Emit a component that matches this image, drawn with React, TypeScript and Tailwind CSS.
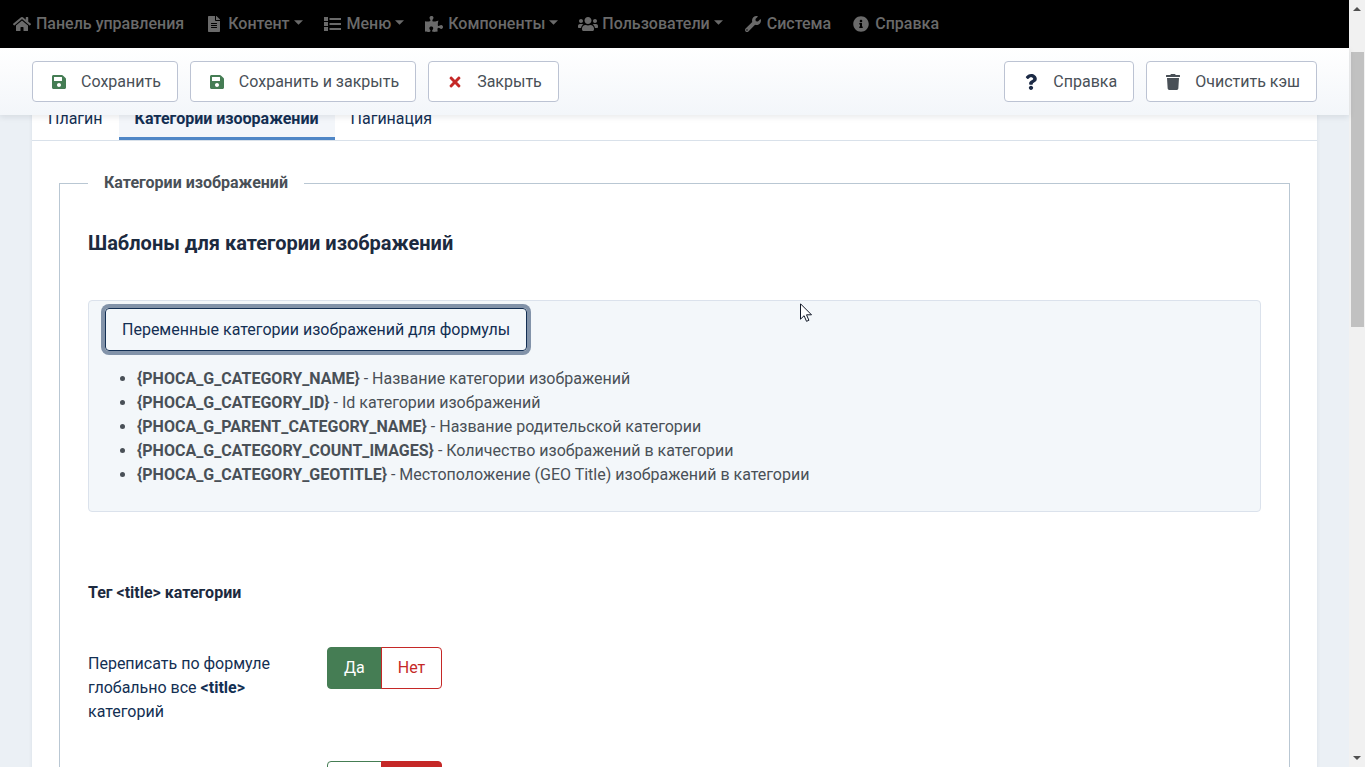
import type { ComponentType, ReactNode } from "react";
import {
  FaFileAlt,
  FaHome,
  FaInfoCircle,
  FaPuzzlePiece,
  FaQuestion,
  FaSave,
  FaTimes,
  FaTrash,
  FaUsers,
  FaWrench,
} from "react-icons/fa";

type Icon = ComponentType<{ className?: string }>;
type NavItem = { label: string; icon: Icon; size?: string; menu?: boolean };

function ListIcon({ className }: { className?: string }) {
  return (
    <svg viewBox="0 0 17 16" className={className} fill="currentColor" aria-hidden="true">
      <path d="M0 1h4v4H0zM0 6h4v4H0zM0 11h4v4H0zM5.5 2H17v2H5.5zM5.5 7H17v2H5.5zM5.5 12H17v2H5.5z" />
    </svg>
  );
}

const navItems: NavItem[] = [
  { label: "Панель управления", icon: FaHome, size: "h-4 w-[18px]" },
  { label: "Контент", icon: FaFileAlt, menu: true },
  { label: "Меню", icon: ListIcon, size: "h-4 w-[17px]", menu: true },
  { label: "Компоненты", icon: FaPuzzlePiece, size: "h-4 w-[18px]", menu: true },
  { label: "Пользователи", icon: FaUsers, size: "h-4 w-5", menu: true },
  { label: "Система", icon: FaWrench },
  { label: "Справка", icon: FaInfoCircle },
];

const variables = [
  { name: "{PHOCA_G_CATEGORY_NAME}", text: "Название категории изображений" },
  { name: "{PHOCA_G_CATEGORY_ID}", text: "Id категории изображений" },
  { name: "{PHOCA_G_PARENT_CATEGORY_NAME}", text: "Название родительской категории" },
  { name: "{PHOCA_G_CATEGORY_COUNT_IMAGES}", text: "Количество изображений в категории" },
  { name: "{PHOCA_G_CATEGORY_GEOTITLE}", text: "Местоположение (GEO Title) изображений в категории" },
];

function NavBar() {
  return (
    <nav className="flex h-12 shrink-0 items-center gap-5 bg-black pl-3 font-medium text-[#6a6a6a]">
      {navItems.map(({ label, icon: Icon, size, menu }) => (
        <a key={label} href="#" className="flex items-center gap-1 whitespace-nowrap">
          <span className="flex w-5 justify-center">
            <Icon className={size ?? "h-4 w-4"} />
          </span>
          {label}
          {menu && (
            <svg viewBox="0 0 10 5" className="mb-1 h-[5px] w-[9px] fill-current" aria-hidden="true">
              <path d="M0 0h10L5 5z" />
            </svg>
          )}
        </a>
      ))}
    </nav>
  );
}

function ToolButton({ icon: Icon, tone, children }: { icon: Icon; tone: string; children: ReactNode }) {
  return (
    <button
      type="button"
      className="flex h-[41px] items-center gap-3 whitespace-nowrap rounded border border-[#bcc3d3] bg-white px-4 text-[#495057]"
    >
      <span className={`flex w-5 justify-center ${tone}`}>
        <Icon className="size-4" />
      </span>
      {children}
    </button>
  );
}

function Toolbar() {
  return (
    <div className="relative z-10 flex h-[67px] shrink-0 items-center gap-3 bg-linear-to-b from-white to-[#f3f6fa] px-8 shadow-[0_2px_6px_rgba(20,30,50,0.1)]">
      <ToolButton icon={FaSave} tone="text-[#457d54]">Сохранить</ToolButton>
      <ToolButton icon={FaSave} tone="text-[#457d54]">Сохранить и закрыть</ToolButton>
      <ToolButton icon={FaTimes} tone="text-[#c52827]">Закрыть</ToolButton>
      <div className="ml-auto flex gap-3">
        <ToolButton icon={FaQuestion} tone="text-[#1c2a45]">Справка</ToolButton>
        <ToolButton icon={FaTrash} tone="text-[#495057]">Очистить кэш</ToolButton>
      </div>
    </div>
  );
}

function Tabs() {
  const tab = "border-b-[3px] border-transparent px-4 pt-3 pb-1.5";
  return (
    <div role="tablist" className="flex border-b border-[#d9e1ea] text-[#132f53]">
      <button type="button" role="tab" aria-selected="false" className={tab}>Плагин</button>
      <button
        type="button"
        role="tab"
        aria-selected="true"
        className="border-b-[3px] border-[#4f86c6] bg-[#f3f6fa] px-4 pt-3 pb-1.5 font-bold"
      >
        Категории изображений
      </button>
      <button type="button" role="tab" aria-selected="false" className={tab}>Пагинация</button>
    </div>
  );
}

function Switcher({ name, labelId, yes }: { name: string; labelId: string; yes: boolean }) {
  return (
    <div role="radiogroup" aria-labelledby={labelId} className="flex h-[42px]">
      <label className="relative flex items-center rounded-l border border-[#457d54] px-4 text-[#457d54] has-checked:bg-[#457d54] has-checked:text-white">
        <input type="radio" name={name} defaultChecked={yes} className="sr-only" />
        Да
      </label>
      <label className="relative -ml-px flex items-center rounded-r border border-[#c52827] px-4 text-[#c52827] has-checked:bg-[#c52827] has-checked:text-white">
        <input type="radio" name={name} defaultChecked={!yes} className="sr-only" />
        Нет
      </label>
    </div>
  );
}

function ScrollBar() {
  return (
    <div className="flex w-4 shrink-0 flex-col items-center bg-[#f1f1f1] py-[7px]" aria-hidden="true">
      <svg viewBox="0 0 8 4" className="h-1 w-2 fill-[#505050]">
        <path d="M0 4h8L4 0z" />
      </svg>
      <div className="mt-[41px] h-[275px] w-[13px] bg-[#c1c1c1]" />
      <svg viewBox="0 0 8 4" className="mt-auto h-1 w-2 fill-[#505050]">
        <path d="M0 0h8L4 4z" />
      </svg>
    </div>
  );
}

export default function App() {
  return (
    <div className="relative flex h-screen overflow-hidden bg-[#ebf0f5] font-['Roboto',sans-serif] text-base text-[#495057]">
      <div className="flex min-w-0 flex-1 flex-col">
        <NavBar />
        <Toolbar />
        <main className="-mt-5 min-h-0 flex-1 px-8">
          <div className="bg-white shadow-[0_0_4px_rgba(20,40,80,0.08)]">
            <Tabs />
            <div className="px-[27px] pt-[30px] pb-8">
              <fieldset className="border border-[#b9c7d3] px-7 pb-8">
                <legend className="px-4 font-bold">Категории изображений</legend>
                <h3 className="mt-9 text-xl leading-6 font-bold text-[#1c2a3f]">
                  Шаблоны для категории изображений
                </h3>
                <div className="mt-[45px] rounded border border-[#dbe2ec] bg-[#f3f7fa] px-4 pt-[7px] pb-6">
                  <button
                    type="button"
                    className="h-[43px] rounded border border-[#132f53] px-4 text-[#132f53] ring-4 ring-[#8293a9]"
                  >
                    Переменные категории изображений для формулы
                  </button>
                  <ul className="mt-4 list-disc pl-8">
                    {variables.map((v) => (
                      <li key={v.name}>
                        <b>{v.name}</b> - {v.text}
                      </li>
                    ))}
                  </ul>
                </div>
                <h4 id="title-heading" className="mt-[69px] font-bold text-[#1c2a3f]">
                  Тег &lt;title&gt; категории
                </h4>
                <div className="mt-[42px] flex items-start">
                  <div id="title-label" className="w-[239px] pt-[5px] pr-12 text-[#132f53]">
                    Переписать по формуле глобально все <b>&lt;title&gt;</b> категорий
                  </div>
                  <Switcher name="title-all" labelId="title-label" yes />
                </div>
                <div className="mt-[37px] ml-[239px] flex items-start">
                  <Switcher name="title-empty" labelId="title-heading" yes={false} />
                </div>
              </fieldset>
            </div>
          </div>
        </main>
      </div>
      <ScrollBar />
      <svg viewBox="0 0 12 19" className="absolute top-[303px] left-[800px] h-[19px] w-3" aria-hidden="true">
        <path
          d="M.5.8v15.4l3.6-3.5 2.4 5.6 2.4-1-2.4-5.5h5z"
          fill="#fff"
          stroke="#111827"
          strokeWidth="1"
        />
      </svg>
    </div>
  );
}
